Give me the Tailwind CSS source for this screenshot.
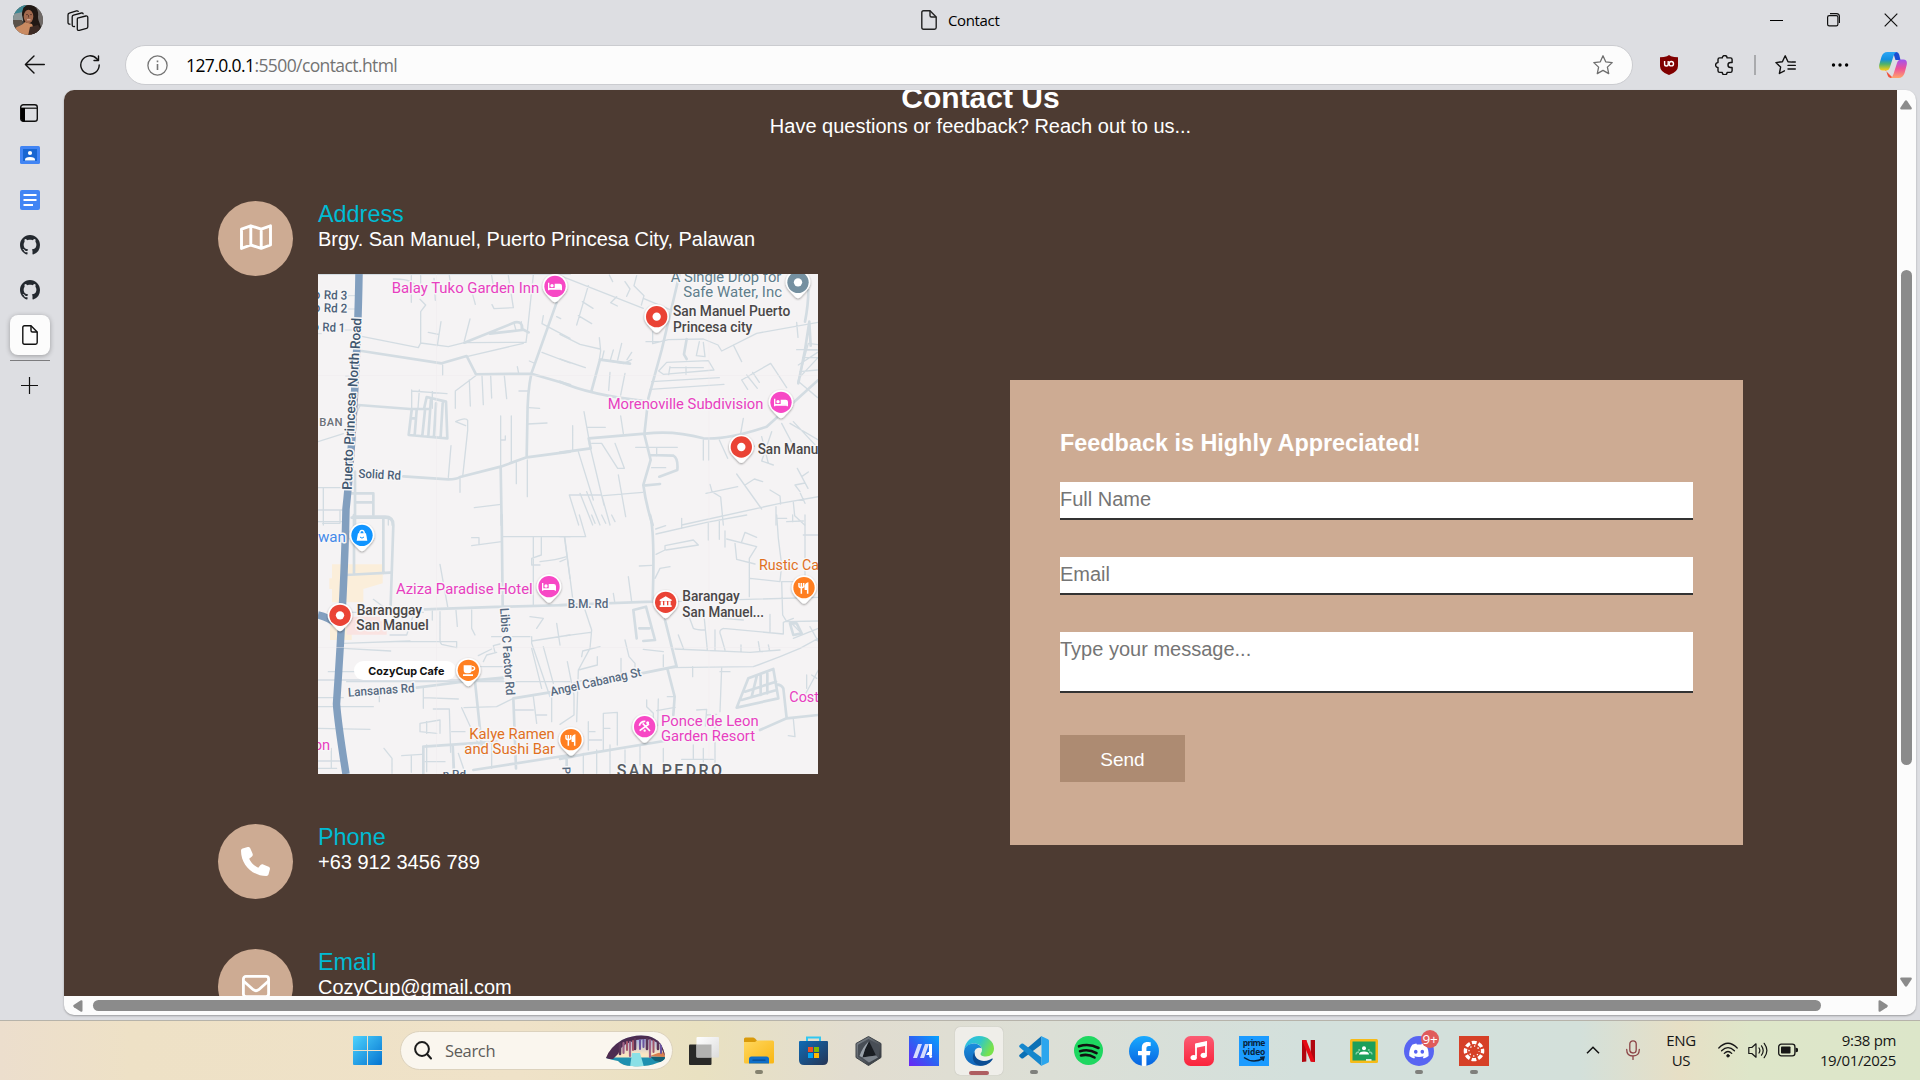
<!DOCTYPE html>
<html lang="en">
<head>
<meta charset="utf-8">
<title>Contact</title>
<script src="https://cdn.jsdelivr.net/npm/@tailwindcss/browser@4"></script>
</head>
<body class="w-[1920px] h-[1080px] overflow-hidden flex flex-col bg-[#dddee2] text-black font-['Open_Sans',sans-serif]">

<!-- Title bar -->
<header class="h-10 shrink-0 flex items-start relative">
  <svg class="ml-[13px] mt-[5px] size-[30px] shrink-0" viewBox="0 0 30 30">
    <defs><clipPath id="av"><circle cx="15" cy="15" r="15"/></clipPath></defs>
    <g clip-path="url(#av)">
      <rect width="30" height="30" fill="#4a4744"/>
      <path d="M0 0h13v9L0 14z" fill="#3d8793"/><path d="M0 9l10-2v9L0 18z" fill="#8d9697"/><path d="M0 15h9v9H0z" fill="#5b5148"/>
      <path d="M22 2h8v20l-5-2z" fill="#6f6966"/>
      <path d="M9 10C9 3 12 0 17 0c6 0 9 5 8 12 0 5 4 7 3 18H14z" fill="#211814"/>
      <path d="M1 26c2-6 7-4 11-9l7 2 2 5-3 7H2z" fill="#c98a61"/><path d="M17 22l8-2 4 6-6 5h-8z" fill="#3c2a24"/>
      <ellipse cx="15.500" cy="11.500" rx="4.800" ry="6.700" fill="#a2694e"/>
      <path d="M10.500 8.500c0-5 7-7.500 10-2l0-3.500-5-2.500-5 2z" fill="#211814"/>
      <path d="M13 9.600h2M17 9.600h2M15.500 10v2.500" stroke="#55332a" stroke-width=".8"/><path d="M14 14.800h3.500" stroke="#e8c0b0" stroke-width="1"/>
    </g>
  </svg>
  <svg class="ml-[24px] mt-[10px] size-[22px] shrink-0" viewBox="0 0 22 22" fill="none" stroke="#111" stroke-width="1.300" stroke-linejoin="round" stroke-linecap="round">
    <path d="M10.500 8.200l8.300-2.200q2-.3 2 1.500v9.300q0 1.200-1.200 1.600l-7.300 2q-2 .4-2-1.500V10q0-1.400 .2-1.800z"/>
    <path d="M7.500 16.500q-2.300 .4-2.300-1.500V6.800q0-1.300 1.300-1.700L14.500 3q1.300-.2 1.600 .8"/>
    <path d="M3 14.200q-2 0-2-1.800V4.900q0-1.300 1.300-1.700L9.500 .9q1.300-.2 1.700 .5"/>
  </svg>
  <div class="absolute left-[921px] top-[10px] flex items-center gap-[11px] h-5">
    <svg class="w-4 h-5" viewBox="0 0 16 20" fill="none" stroke="#222" stroke-width="1.400" stroke-linejoin="round"><path d="M2.500.8h6.500L15.200 7v10.500q0 1.700-1.700 1.700h-11Q.8 19.200.8 17.500v-15Q.8.8 2.500.8z"/><path d="M9 .8V5.500Q9 7 10.500 7h4.700"/></svg>
    <span class="text-[15px] leading-5 tracking-[-0.350px] text-black">Contact</span>
  </div>
  <div class="absolute left-[1770px] top-[13px] flex gap-[43px] h-[14px] items-center">
    <svg class="w-[13px] h-[13px]" viewBox="0 0 13 13"><path d="M0 6.500h13" stroke="#000" stroke-width="1"/></svg>
    <svg class="w-[14px] h-[14px]" viewBox="0 0 14 14" fill="none" stroke="#111" stroke-width="1.200"><rect x="1.600" y="2.600" width="10.300" height="10.300" rx="1.600"/><path d="M4 .7h6.500q2.900 0 2.900 2.900V10"/></svg>
    <svg class="w-[14px] h-[14px] ml-px" viewBox="0 0 14 14"><path d="M.7.7l12.600 12.600M13.300.7L.7 13.300" stroke="#111" stroke-width="1.200"/></svg>
  </div>
</header>

<!-- Toolbar -->
<div class="h-[50px] shrink-0 flex items-start relative">
  <svg class="ml-[24px] mt-[15px] w-[21px] h-[19px] shrink-0" viewBox="0 0 21 19" fill="none" stroke="#111" stroke-width="1.400" stroke-linecap="round" stroke-linejoin="round"><path d="M20.300 9.500H1.500M10 1L1.400 9.500 10 18"/></svg>
  <svg class="ml-[35px] mt-[15px] size-5 shrink-0" viewBox="0 0 20 20" fill="none" stroke="#111" stroke-width="1.400" stroke-linecap="round" stroke-linejoin="round"><path d="M19.200 10A9.200 9.200 0 1 1 16.800 3.800L18.300 5.300M18.500 1v4.500H14"/></svg>
  <div class="ml-[25px] mt-[5px] w-[1508px] h-[40px] shrink-0 rounded-full bg-[#fcfcfc] border border-[#cbccd0] flex items-center pl-[21px] pr-[19px]">
    <svg class="size-[21px]" viewBox="0 0 21 21" fill="none" stroke="#757575" stroke-width="1.300"><circle cx="10.500" cy="10.500" r="9.600"/><path d="M10.500 9v6M10.500 5.600v1.600" stroke-width="1.600"/></svg>
    <div class="ml-[18px] text-[17.500px] leading-6 tracking-[-0.600px] text-[#737373] whitespace-nowrap"><span class="text-black">127.0.0.1</span>:5500/contact.html</div>
    <svg class="ml-auto size-5" viewBox="0 0 20 20" fill="none" stroke="#6f6f6f" stroke-width="1.300" stroke-linejoin="round"><path d="M10 .8l2.700 6 6.500.8-4.800 4.500 1.300 6.500L10 15.400l-5.700 3.200 1.300-6.500L.8 7.600l6.500-.8z"/></svg>
  </div>
  <svg class="ml-[27px] mt-[15px] w-[18px] h-5 shrink-0" viewBox="0 0 18 20"><path d="M9 0l2 1.200q3 1 7 1V11q0 6-9 9-9-3-9-9V2.200q4 0 7-1z" fill="#800000"/><path d="M4.600 6v3.200a1.800 1.800 0 0 0 3.600 0V6" fill="none" stroke="#fff" stroke-width="1.400"/><circle cx="11.300" cy="8.700" r="2.200" fill="none" stroke="#fff" stroke-width="1.400"/></svg>
  <svg class="ml-[37px] mt-[15px] w-[19px] h-5 shrink-0" viewBox="0 0 19 20" fill="none" stroke="#111" stroke-width="1.400" stroke-linejoin="round"><path d="M3 4.600q0-1.700 1.700-1.700h2.600a2.400 2.400 0 0 1 4.800 0h3.300q1.700 0 1.700 1.700v2.900h-1.600a2.500 2.500 0 0 0 0 5h1.600v3.200q0 1.700-1.700 1.700h-3.300a2.400 2.400 0 0 1-4.800 0H4.700Q3 17.400 3 15.700v-3.300a2.400 2.400 0 0 1 0-4.800z"/></svg>
  <div class="ml-[20px] mt-[15px] w-[2px] h-5 bg-[#a9aaad] shrink-0"></div>
  <svg class="ml-[19px] mt-[15px] w-[21px] h-5 shrink-0" viewBox="0 0 21 20" fill="none" stroke="#111" stroke-width="1.400" stroke-linejoin="round" stroke-linecap="round"><path d="M17 7.100L13 6.700 10.200 .8 7.400 6.700.9 7.600l4.700 4.500-1.200 6.400 5-2.700M13 10.400h7.300M13 14h7.300M17 7h3.300"/></svg>
  <svg class="ml-[35px] mt-[22px] w-[18px] h-[6px] shrink-0" viewBox="0 0 18 6"><circle cx="2.500" cy="3" r="1.700"/><circle cx="9" cy="3" r="1.700"/><circle cx="15.600" cy="3" r="1.700"/></svg>
  <svg class="ml-[30px] mt-[12px] w-[28px] h-[26px] shrink-0" viewBox="0 0 28 26">
    <defs>
      <linearGradient id="cp1" x1="0" y1="0" x2="0" y2="1"><stop offset="0" stop-color="#2aa5f5"/><stop offset=".4" stop-color="#1490e0"/><stop offset=".65" stop-color="#4eb26b"/><stop offset="1" stop-color="#ffcf10"/></linearGradient>
      <linearGradient id="cp2" x1="0" y1="0" x2="0" y2="1"><stop offset="0" stop-color="#a055f0"/><stop offset=".5" stop-color="#ee5298"/><stop offset="1" stop-color="#ffa56a"/></linearGradient>
    </defs>
    <path d="M14 0h3q2.500 0 3.300 3l1.200 5h-5z" fill="#1b4bd0"/>
    <path d="M6 18l8 8h-2.500q-2.200 0-3-3L7 18z" fill="#f04e3a"/>
    <path d="M8.500 0h9q-2 .5-3 4l-3.500 11q-1 3.500-4 3.500H4Q-.8 18.500.3 12.500L2.400 5Q4 0 8.500 0z" fill="url(#cp1)"/>
    <path d="M19.500 26h-8q2-.5 3-4l3.500-11q1-3.500 4-3.500h2.500q4.200 0 3.200 5.500L25.600 21q-1.600 5-6.100 5z" fill="url(#cp2)"/>
  </svg>
</div>

<!-- Vertical tab strip and web page -->
<div class="h-[925px] shrink-0 flex">
  <nav class="w-16 shrink-0 flex flex-col items-center pr-[4px]">
    <svg class="mt-[14px] mr-[2px] size-[18px]" viewBox="0 0 18 18"><rect x=".7" y=".7" width="16.600" height="16.600" rx="2.600" fill="none" stroke="#111" stroke-width="1.400"/><path d="M1 4.200h16" stroke="#111" stroke-width="1.200"/><path d="M1 4h4v13.500H3Q1 17 1 15z"/></svg>
    <svg class="mt-[24px] w-5 h-[18px]" viewBox="0 0 20 18"><rect width="20" height="18" rx="1.500" fill="#4285f4"/><rect x="3" y="3" width="14" height="12" fill="#1967d2"/><circle cx="10" cy="7" r="2.100" fill="#fff"/><path d="M5 14.500v-1q0-2.600 5-2.600t5 2.600v1z" fill="#fff"/></svg>
    <svg class="mt-[26px] size-5" viewBox="0 0 20 20"><rect width="20" height="20" rx="2" fill="#4285f4"/><path d="M3.500 5h13M3.500 10h13M3.500 15h9.500" stroke="#fff" stroke-width="2.200"/></svg>
    <svg class="mt-[25px] size-5" viewBox="0 0 16 16" fill="#24292f"><path d="M8 0C3.580 0 0 3.580 0 8c0 3.540 2.290 6.530 5.470 7.590.4.070.55-.17.55-.38 0-.19-.01-.82-.01-1.490-2.010.37-2.530-.49-2.690-.94-.09-.23-.48-.94-.82-1.130-.28-.15-.68-.52-.01-.53.63-.01 1.080.58 1.230.82.720 1.210 1.870.87 2.330.66.070-.52.280-.87.510-1.070-1.780-.2-3.640-.89-3.640-3.950 0-.87.310-1.590.82-2.150-.08-.2-.36-1.020.08-2.120 0 0 .67-.21 2.200.82.640-.18 1.320-.27 2-.27s1.360.09 2 .27c1.530-1.040 2.200-.82 2.200-.82.440 1.100.16 1.920.08 2.120.51.560.82 1.270.82 2.150 0 3.070-1.870 3.750-3.650 3.950.29.250.54.730.54 1.480 0 1.070-.01 1.930-.01 2.200 0 .21.150.46.55.38A8.010 8.010 0 0 0 16 8c0-4.420-3.580-8-8-8z"/></svg>
    <svg class="mt-[25px] size-5" viewBox="0 0 16 16" fill="#24292f"><path d="M8 0C3.580 0 0 3.580 0 8c0 3.540 2.290 6.530 5.470 7.590.4.070.55-.17.55-.38 0-.19-.01-.82-.01-1.490-2.010.37-2.530-.49-2.690-.94-.09-.23-.48-.94-.82-1.130-.28-.15-.68-.52-.01-.53.63-.01 1.080.58 1.230.82.720 1.210 1.870.87 2.330.66.070-.52.280-.87.510-1.070-1.780-.2-3.640-.89-3.640-3.950 0-.87.310-1.590.82-2.150-.08-.2-.36-1.020.08-2.120 0 0 .67-.21 2.200.82.640-.18 1.320-.27 2-.27s1.360.09 2 .27c1.530-1.040 2.200-.82 2.200-.82.440 1.100.16 1.920.08 2.120.51.560.82 1.270.82 2.150 0 3.070-1.870 3.750-3.650 3.950.29.250.54.730.54 1.480 0 1.070-.01 1.930-.01 2.200 0 .21.150.46.55.38A8.010 8.010 0 0 0 16 8c0-4.420-3.580-8-8-8z"/></svg>
    <div class="mt-[15px] size-10 rounded-lg bg-[#fcfcfc] shadow-[0_1px_5px_rgba(0,0,0,0.3)] flex items-center justify-center">
      <svg class="w-4 h-5" viewBox="0 0 16 20" fill="none" stroke="#111" stroke-width="1.400" stroke-linejoin="round"><path d="M2.500.8h6.500L15.200 7v10.500q0 1.700-1.700 1.700h-11Q.8 19.200.8 17.500v-15Q.8.8 2.500.8z"/><path d="M9 .8V5.500Q9 7 10.500 7h4.700"/></svg>
    </div>
    <div class="mt-[5px] w-10 h-px bg-[#7c7c7e]"></div>
    <svg class="mt-[16px] mr-[1px] size-[17px]" viewBox="0 0 17 17"><path d="M8.500 0v17M0 8.500h17" stroke="#111" stroke-width="1.200"/></svg>
  </nav>

  <div class="w-[1852px] h-[925px] rounded-[10px] overflow-hidden bg-[#fcfcfc] shadow-[0_1px_2px_rgba(0,0,0,0.3)] flex flex-col">
    <div class="flex h-[906px] shrink-0">
      <main class="w-[1833px] h-[906px] overflow-hidden bg-[#4d3b32] font-['Liberation_Sans',Arial,sans-serif] text-white text-[20px] leading-[23px]">
        <div class="-mt-[9px] text-center">
          <h1 class="text-[30px] leading-[34px] font-bold">Contact Us</h1>
          <p>Have questions or feedback? Reach out to us...</p>
        </div>
        <div class="mt-[63px] mx-[154px] h-[823px] flex items-center justify-between">
          <section class="flex flex-col gap-[50px]">
            <div class="flex items-start gap-[25px]">
              <div class="size-[75px] rounded-full bg-[#cdab93] flex items-center justify-center pb-[3px]">
                <svg class="w-8 h-[26px]" viewBox="0 0 32 26" fill="none" stroke="#fff" stroke-width="2.900" stroke-linejoin="round"><path d="M1.500 5.200L10.800 1.800 21.200 5.200 30.500 1.800V21L21.200 24.400 10.800 21 1.500 24.400zM10.800 1.800V21M21.200 5.200v19"/></svg>
              </div>
              <div class="h-[573px] flex flex-col">
                <h3 class="text-[23.400px] leading-[27px] text-[#00bcd4]">Address</h3>
                <p>Brgy. San Manuel, Puerto Princesa City, Palawan</p>
                <svg class="mt-[23px] size-[500px]" viewBox="0 0 500 500" font-family="Roboto, sans-serif" font-weight="500">
                  <defs>
                    <filter id="sh" x="-50%" y="-50%" width="200%" height="200%"><feDropShadow dx="0" dy="3" stdDeviation="3" flood-color="#000" flood-opacity=".4"/></filter>
                    <path id="pin" d="M-37 0A37 37 0 1 1 37 0C37 18 22 28 10 42Q0 54-10 42C-22 28-37 18-37 0Z" fill="#fff" filter="url(#sh)"/>
                    <g id="red"><use href="#pin"/><circle r="32" fill="#ea4335"/><circle r="12.500" fill="#fff"/></g>
                    <g id="bed"><use href="#pin"/><circle r="32" fill="#f748c5"/><path d="M-19-11V12M-19 8H19M19 12V-1Q19-6 14-6H1V7H-18" fill="none" stroke="#fff" stroke-width="4"/><path d="M1-6h13q5 0 5 5v8H1z" fill="#fff"/><circle cx="-9" cy="-2" r="5" fill="#fff"/></g>
                    <g id="food"><use href="#pin"/><circle r="32" fill="#ff7f21"/><path d="M-8-14V18M-15-14v9q0 5 7 5t7-5v-9M11 18V-13q-9 3-7 18h7" fill="none" stroke="#fff" stroke-width="4.500"/><path d="M11-14q-9 4-7 19h7z" fill="#fff"/></g>
                  </defs>
                  <rect width="500" height="500" fill="#f5f3f4"/>
                  <!-- north-west roads -->
                  <g transform="translate(-8 -9) scale(.33333)" fill="none" stroke="#d3dce2" stroke-width="4" stroke-linejoin="round" stroke-linecap="round">
                    <path d="M155 214L325 248 332 234 415 245 463 233 648 232 652 200 670 30M332 234V140L347 120 330 103M355 202l30 6M393 170l-11 72M480 162L463 228M250 42q60-2 75 30M304 32v80M332 32v40M372 40l4 66M418 32l6 40M484 74l12 44M545 32l6 36M595 32l15 96-58 3-6-12M612 174l6 22M634 170v22M640 235l-170 40M398 300v30M500 330L436 378V430M478 345l3 78M516 332l4 87M542 332l3 67M583 332l7 69M622 305l4 20M305 378l106 8M305 375V440M328 375l-4 55M367 380V430M437 470q30-14 36-4v30L458 635M437 470l30 12M423 542l-8 95M450 640v42M572 453V605M604 453V590M572 525h14V513M619 592v64M652 585v110M655 378h-28M657 428l32 2M653 477l58-3M493 728l80-10M700 152l-4 24 84 44M696 262l84 32M658 288l14 6M740 155l12 6M24 530L100 506M24 668H100M40 668V780M24 735h76M90 735V775M38 775h52M150 422l-12 25M220 760v20M235 760v20"/>
                    <path stroke-width="8" d="M155 258L395 295 470 273 498 328 664 326 780 360M664 326Q652 380 652 470L650 577M280 634L415 643Q440 643 450 636L572 605 650 577 780 560M572 605L575 780M145 420L300 432H360M740 112L664 326M463 233L615 172Q640 168 636 195L540 206M636 192l20 10M305 435L296 510 412 520 408 410 350 396 342 432M345 435L337 512M363 400L355 512M378 415l-6 98M398 415l-6 100M320 435l-6 75M305 460h12M135 620V780M115 685H190V750M140 712h48M125 758H225Q250 758 248 780"/>
                    <path stroke-width="3" d="M115 92h20M115 132h20M105 195h26M24 206h10M107 333h38"/>
                    <path stroke-width="6" d="M24 27H780" />
                  </g>
                  <!-- north-east roads -->
                  <g transform="translate(242 -9) scale(.33333)" fill="none" stroke="#d3dce2" stroke-width="4" stroke-linejoin="round" stroke-linecap="round">
                    <path d="M0 32L250 130M85 62L50 180M67 110l32 20M55 152l40 24M148 30l10 20M195 50l15 22-10 22M230 32l-8 30 30 30-8 28M170 95l-18 18 20 10M250 100l80 34M0 208L60 238 120 252M0 282L76 308M118 218l4 40-4 25M120 282L190 296 215 284M185 235l-12 50M160 255l-10 34M132 258l-6 26M215 262l-14 22M150 322l-4 54M195 325L182 390M258 230h40M278 200v36L325 224 430 222 474 240 485 258 590 205 775 172M430 232L435 275 409 272 418 230M520 240l25 50M296 318L320 292 445 287 462 315 310 328zM330 308h100M330 305l-4 24M378 306v22M275 350L478 338M270 373l222-15M545 345L632 295 680 368M545 345l18 28M560 330l32 40M578 322l20 30M710 172l4 45M745 235l-32 118M745 235l30 4M715 300l58-38M720 320l52-5M716 340l56-60M718 352l55 46M735 255h38M728 278h45M710 254h60M72 440l14 78M80 487h56M182 453l8 52M38 482v75M88 536L132 720M165 535l28 75h-20L125 535H95M55 560L100 705M28 690H125L150 780M28 690l28 90M60 685l38 95M80 680l40 100M175 630l22 125M130 692l118-10M227 547h125M290 547V572M275 608h42M430 525v60M446 525v60M478 525l25 55M550 460l-8 45M530 627L605 732M555 660l28-18 25 8M438 685l95-20M450 658l6 22 26 16 8 84M365 780L660 715 775 695M568 520l15 24M605 515l20 80M640 600L605 588 635 500M665 475l50 95M700 470l75 80M690 475l85 50M712 610l32 60M725 635l20-14M630 675l30 18 2 24M720 680L705 660l30-6M648 725v55M700 712l4 40 30 28M735 715l-14-30M680 770l50-2"/>
                    <path stroke-width="8" d="M358 30L305 255 265 400 253 508 272 585 250 660Q258 720 278 780M0 350Q90 390 255 408M95 376L120 284 210 296M380 222L372 268l8 14M0 563L92 550 86 520 255 506Q340 495 430 520 500 525 620 485L775 345M270 570L340 572Q355 580 352 615L298 635M250 662L300 657M748 170L735 255 715 355M745 75q0 45-10 95M748 172l4 70"/>
                  </g>
                  <!-- south-west roads -->
                  <g transform="translate(-8 241) scale(.33333)" fill="none" stroke="#d3dce2" stroke-width="4" stroke-linejoin="round" stroke-linecap="round">
                    <path stroke="none" fill="#fbeeda" d="M66 148H218V205L160 222V262H66V222H58V190H66zM60 330H125V375H60z"/>
                    <path stroke="none" fill="#fae3e1" d="M110 305h100v14h20v40H110z"/>
                    <path d="M580 65H780M485 92L575 80M485 68h22v20M670 65V270M694 68V120L665 130V150H690M690 140q50-5 80-15M763 65L780 190M390 148L413 275M190 253l40 30M24 20l70 0M125 292H340M367 288V315M390 290v85Q390 385 395 388L440 398V380H240M438 286l4 48M485 285v55l10 20M100 385L300 378M100 400L242 408M240 360H290L310 300M545 365H660M660 305l40 5-20 30M665 378L780 360M740 325l10 65M665 365v20L720 545M665 400l30 120M700 395l30 110M505 422l40-20M520 440l10-20 30-8M555 412l-5-20 20-5M445 455H580M24 495H580M55 470h140M110 500H780M340 520V580M340 548L445 552M208 540v20M24 548H100M24 575H190M24 640L180 643M24 738H95M64 700v60M24 760H80M370 582h48l4 130M330 625l60-10v40M330 625V650L380 655M350 620v35M390 618v30M222 700l24 30v45M275 722L335 718M304 722v50M462 578L560 575 610 550M455 578L520 720M615 585H670M680 600h30M670 545l10 80M725 545v75M700 660h30M425 650h40M350 690v80M430 720v55M345 740h60M445 715l20 58M545 680v80"/>
                    <path stroke-width="8" d="M575 0L578 270M345 283L580 275 780 270M130 5H225Q250 5 250 30L242 270M132 0V175M220 10v165M105 180L240 173M320 518L500 495 580 488M495 500L515 690M340 695L560 680M428 690l4 80M340 695v80M610 550L618 760M610 550L720 532M490 765L780 720"/>
                  </g>
                  <!-- south-east roads -->
                  <g transform="translate(242 241) scale(.33333)" fill="none" stroke="#d3dce2" stroke-width="4" stroke-linejoin="round" stroke-linecap="round">
                    <path d="M0 65H77L58 0M95 0l10 25M125 0l12 25M155 0l10 20M14 65L40 265M0 140l18-8M287 42l30-10M288 57L440 22 560 0M365 10v30M445 25v50M478 15v58M495 48v48M500 72L590 95 568 130V245M545 80l10-28 35 15M525 85l5 48 55 14M288 118L315 105V92L400 75 415 90 318 105M238 153l38-2M285 190L300 160 330 155M205 185l10 75M160 235l4 25M75 285L95 345 90 400 55 465 50 620M18 362L92 352M65 425L68 408 120 395M183 430v45M195 375l12 50 18 20v40M340 260l500-15M570 190L660 200 665 150 655 70 650 0M735 0V200M650 10h30M698 0v20M775 60H730M735 200H665L668 300 680 320 775 318M380 285l20 55Q410 345 435 345M430 280l12 125M490 340L670 357V322L700 310M490 340Q475 345 482 360L495 405M465 345v60M345 402L570 412 660 405M355 360l15 40M543 390v20M595 380l5 30M625 390l4 18M775 370L720 400Q650 430 580 455L330 458M775 340L700 370M630 298v55M490 310l60 5M690 320L720 350M750 335l25 45M0 530L50 500 170 480M22 440L42 540V600L0 628M112 425V450L55 465M250 403L310 410M310 420v35M322 545h20M295 552l-2 80M260 555v20l20 20v40M290 587l55-10M85 620V705M85 650h20M130 595L172 592V690M130 595V705M132 640h18M85 675h40M398 455v30M485 458L480 590M480 470h30M410 585l30-2-4 50M365 733H460M400 690v40M465 630V775M440 600L470 598M700 612L705 665 685 662M740 480v40M735 540l40-75M755 480l15 10M150 690v85M110 705v70M195 705v70M240 690v60M70 715v60M310 700v75M430 700v75"/>
                    <path stroke-width="8" d="M270 0Q285 50 278 255M0 270L278 260M315 315L350 455M245 475L345 455M322 460L344 545 340 600M220 285L258 275 285 375 250 378M220 285l10 85M238 340h30M0 732L70 718 330 675M600 645L680 610 775 600M680 610L670 520Q665 510 650 508M530 578L565 490 640 462 655 550zM555 530L648 500M545 555L650 525M602 480v60M622 475v60M590 485l-15 60M690 325l10 35 25-5-15-30zM20 732v45"/>
                  </g>
                  <!-- national highway -->
                  <path d="M41 0C40 70 34 180 28 235C27 290 24 350 18.500 430Q20 450 28 500M0 341Q10 343 22 352" fill="none" stroke="#829fbf" stroke-width="7.500"/>
                  <path d="M0 101.500H500M118.500 0V500M391 0V500M0 373.500H500" stroke="#eeebec" stroke-width=".6" opacity=".7"/>
                  <!-- labels -->
                  <g stroke="#f7f6f7" stroke-width="9" paint-order="stroke" stroke-linejoin="round">
                    <g transform="translate(-8 -9) scale(.33333)" font-size="37" fill="#4b5f78">
                      <text x="245" y="85" font-size="44" font-weight="400" fill="#e83fc0" textLength="443" lengthAdjust="spacingAndGlyphs">Balay Tuko Garden Inn</text>
                      <text x="10" y="102">o</text><text x="41" y="102" textLength="70" lengthAdjust="spacingAndGlyphs" transform="rotate(2 41 102)">Rd 3</text>
                      <text x="10" y="141">o</text><text x="41" y="141" textLength="70" lengthAdjust="spacingAndGlyphs" transform="rotate(2 41 141)">Rd 2</text>
                      <text x="6" y="199">o</text><text x="37" y="199" textLength="68" lengthAdjust="spacingAndGlyphs" transform="rotate(2 37 199)">Rd 1</text>
                      <text x="28" y="484" font-size="34" fill="#6b7178" textLength="70">BAN</text>
                      <text x="145" y="638" textLength="127" lengthAdjust="spacingAndGlyphs" transform="rotate(3 145 638)">Solid Rd</text>
                      <g fill="#3f566f" font-size="41"><text transform="translate(125 675) rotate(-88)" textLength="122" lengthAdjust="spacingAndGlyphs">Puerto</text><text transform="translate(131 540) rotate(-87.500)" textLength="158" lengthAdjust="spacingAndGlyphs">Princesa</text><text transform="translate(142 367) rotate(-87)" textLength="103" lengthAdjust="spacingAndGlyphs">North</text><text transform="translate(149 253) rotate(-87)" textLength="94" lengthAdjust="spacingAndGlyphs">Road</text></g>
                    </g>
                    <g transform="translate(242 -9) scale(.33333)" font-size="44" font-weight="400">
                      <g fill="#607d8b"><text x="332" y="52" textLength="332" lengthAdjust="spacingAndGlyphs">A Single Drop for</text><text x="370" y="95" textLength="296" lengthAdjust="spacingAndGlyphs">Safe Water, Inc</text></g>
                      <g fill="#4a4747" font-weight="500" font-size="42"><text x="339" y="153" textLength="352" lengthAdjust="spacingAndGlyphs">San Manuel Puerto</text><text x="339" y="200" textLength="238" lengthAdjust="spacingAndGlyphs">Princesa city</text><text x="593" y="566" textLength="182" lengthAdjust="spacingAndGlyphs">San Manu</text></g>
                      <text x="143" y="433" fill="#e83fc0" textLength="467" lengthAdjust="spacingAndGlyphs">Morenoville Subdivision</text>
                    </g>
                    <g transform="translate(-8 241) scale(.33333)" font-size="44" font-weight="400">
                      <text x="24" y="82" fill="#4489e8" textLength="84" lengthAdjust="spacingAndGlyphs">wan</text>
                      <text x="258" y="236" fill="#e83fc0" textLength="410" lengthAdjust="spacingAndGlyphs">Aziza Paradise Hotel</text>
                      <g fill="#4a4747" font-weight="500" font-size="42"><text x="140" y="299" textLength="196" lengthAdjust="spacingAndGlyphs">Baranggay</text><text x="139" y="345" textLength="217" lengthAdjust="spacingAndGlyphs">San Manuel</text></g>
                      <g fill="#56697f" font-weight="500" font-size="37"><text transform="translate(570 280) rotate(86)" textLength="262" lengthAdjust="spacingAndGlyphs">Libis C Factor Rd</text><text transform="translate(115 545) rotate(-4)" textLength="200" lengthAdjust="spacingAndGlyphs">Lansanas Rd</text></g>
                      <g fill="#e0701f"><text x="478" y="672" textLength="256" lengthAdjust="spacingAndGlyphs">Kalye Ramen</text><text x="463" y="717" textLength="272" lengthAdjust="spacingAndGlyphs">and Sushi Bar</text></g>
                      <text x="11" y="706" fill="#e83fc0">on</text>
                      <text x="398" y="790" fill="#56697f" font-size="35" font-weight="500">n Rd</text>
                      <rect x="132" y="438" width="306" height="57" rx="28" fill="#fff" stroke="none"/>
                      <text x="175" y="479" font-family="Inter, sans-serif" font-weight="700" font-size="33" fill="#111" stroke="none" textLength="228" lengthAdjust="spacingAndGlyphs">CozyCup Cafe</text>
                    </g>
                    <g transform="translate(242 241) scale(.33333)" font-size="44" font-weight="400">
                      <text x="597" y="164" fill="#e0701f" textLength="180" lengthAdjust="spacingAndGlyphs">Rustic Ca</text>
                      <g fill="#4a4747" font-weight="500" font-size="42"><text x="367" y="259" textLength="172" lengthAdjust="spacingAndGlyphs">Barangay</text><text x="367" y="306" textLength="245" lengthAdjust="spacingAndGlyphs">San Manuel...</text></g>
                      <g fill="#56697f" font-weight="500" font-size="36"><text x="23" y="279" textLength="122" lengthAdjust="spacingAndGlyphs">B.M. Rd</text><text transform="translate(-26 543) rotate(-12.500)" textLength="278" lengthAdjust="spacingAndGlyphs" font-size="37">Angel Cabanag St</text><text transform="translate(7 756) rotate(88)" font-size="34">P</text></g>
                      <g fill="#e83fc0"><text x="303" y="634" textLength="293" lengthAdjust="spacingAndGlyphs">Ponce de Leon</text><text x="303" y="679" textLength="282" lengthAdjust="spacingAndGlyphs">Garden Resort</text><text x="688" y="560" textLength="89" lengthAdjust="spacingAndGlyphs">Cost</text></g>
                      <text x="170" y="784" font-size="48" font-weight="500" fill="#555a60" textLength="316">SAN PEDRO</text>
                    </g>
                  </g>
                  <!-- pins -->
                  <g transform="translate(-8 -9) scale(.33333)"><use href="#bed" x="735" y="64"/></g>
                  <g transform="translate(242 -9) scale(.33333)"><use href="#red" x="290" y="155"/><use href="#red" x="544" y="546"/><use href="#bed" x="663" y="412"/><g transform="translate(714 52)"><use href="#pin"/><circle r="32" fill="#7590a0"/><circle r="12.500" fill="#fff"/></g></g>
                  <g transform="translate(-8 241) scale(.33333)">
                    <g transform="translate(156 61)"><use href="#pin"/><circle r="32" fill="#1094ff"/><path d="M-12-6h24l4 22h-32z" fill="#fff"/><path d="M-7-5q0-10 7-10t7 10" fill="none" stroke="#fff" stroke-width="4"/><path d="M-6 5q6 7 12 0" fill="none" stroke="#1094ff" stroke-width="3"/></g>
                    <use href="#bed" x="717" y="215"/><use href="#red" x="90" y="301"/>
                    <g transform="translate(475 466)"><use href="#pin"/><circle r="32" fill="#ff7f21"/><path d="M-14-15h24v15q0 9-9 9h-6q-9 0-9-9zM-16 12h30v5h-30z" fill="#fff"/><path d="M10-12q9 0 9 6t-10 7" fill="none" stroke="#fff" stroke-width="4"/></g>
                  </g>
                  <g transform="translate(242 241) scale(.33333)">
                    <g transform="translate(317 262)"><use href="#pin"/><circle r="32" fill="#ea4335"/><path d="M0-18L18-8v4h-36v-4zM-15-3h7V9h-7zM-4-3h8V9h-8zM8-3h7V9H8zM-18 9h36v5h-36z" fill="#fff"/></g>
                    <use href="#food" x="732" y="218"/><use href="#food" x="33" y="674"/>
                    <g transform="translate(254 635)"><use href="#pin"/><circle r="32" fill="#f748c5"/><path d="M-15 12L13-8M-6-10L16 13M-16-3q4-14 18-13" fill="none" stroke="#fff" stroke-width="5"/><circle cx="9" cy="-12" r="4.500" fill="#fff"/><circle cx="0" cy="12" r="3.500" fill="#fff"/></g>
                  </g>
                </svg>
              </div>
            </div>
            <div class="flex items-start gap-[25px]">
              <div class="size-[75px] rounded-full bg-[#cdab93] flex items-center justify-center">
                <svg class="size-[29px]" viewBox="0 0 512 512" fill="#fff"><path d="M164.900 24.600c-7.700-18.600-28-28.500-47.400-23.200l-88 24C12.100 30.200 0 46 0 64c0 247.400 200.600 448 448 448 18 0 33.800-12.100 38.600-29.500l24-88c5.300-19.400-4.600-39.700-23.200-47.400l-96-40c-16.300-6.800-35.200-2.100-46.300 11.600L304.700 368C234.300 334.700 177.300 277.700 144 207.300l49.300-40.300c13.700-11.200 18.400-30 11.600-46.300l-40-96z"/></svg>
              </div>
              <div><h3 class="text-[23.400px] leading-[27px] text-[#00bcd4]">Phone</h3><p>+63 912 3456 789</p></div>
            </div>
            <div class="flex items-start gap-[25px]">
              <div class="size-[75px] rounded-full bg-[#cdab93] flex items-center justify-center pb-px">
                <svg class="w-[28px] h-[23px]" viewBox="0 0 28 23" fill="none" stroke="#fff" stroke-width="2.800" stroke-linejoin="round"><rect x="1.400" y="1.400" width="25.200" height="20.200" rx="2.500"/><path d="M1.500 6l9.800 8.700q2.700 2 5.400 0L26.500 6"/></svg>
              </div>
              <div><h3 class="text-[23.400px] leading-[27px] text-[#00bcd4]">Email</h3><p>CozyCup@gmail.com</p></div>
            </div>
          </section>

          <form class="w-[733px] h-[465px] bg-[#cdab93] p-[50px] flex flex-col items-stretch">
            <h3 class="text-[23.400px] leading-[26px] font-bold">Feedback is Highly Appreciated!</h3>
            <input class="mt-[26px] h-[38px] bg-white border-b-2 border-[#333] pt-[6px] pb-[7px] placeholder:text-[#757575]" placeholder="Full Name">
            <input class="mt-[37px] h-[38px] bg-white border-b-2 border-[#333] pt-[6px] pb-[7px] placeholder:text-[#757575]" placeholder="Email">
            <textarea class="mt-[37px] h-[61px] bg-white border-b-2 border-[#333] pt-[6px] resize-none overflow-hidden placeholder:text-[#757575]" placeholder="Type your message..."></textarea>
            <button type="button" class="mt-[42px] w-[125px] h-[47px] shrink-0 bg-[#ad8b72] text-[19px] text-white pt-px">Send</button>
          </form>
        </div>
      </main>
      <div class="w-[19px] h-full flex flex-col items-center pr-px">
        <svg class="mt-[10px] w-[12px] h-[10px] shrink-0" viewBox="0 0 12 10"><path d="M4.800 1q1.200-1.600 2.400 0L11.500 7.500Q12.500 9.500 10.500 9.500h-9Q-.5 9.500.5 7.500z" fill="#8b8b8b"/></svg>
        <div class="mt-[160px] w-[11px] h-[495px] shrink-0 rounded-full bg-[#8b8b8b]"></div>
        <svg class="mt-auto mb-[9px] w-[12px] h-[10px] shrink-0 rotate-180" viewBox="0 0 12 10"><path d="M4.800 1q1.200-1.600 2.400 0L11.500 7.500Q12.500 9.500 10.500 9.500h-9Q-.5 9.500.5 7.500z" fill="#8b8b8b"/></svg>
      </div>
    </div>
    <div class="h-[19px] shrink-0 flex items-center">
      <svg class="ml-[9px] w-[10px] h-[12px] shrink-0" viewBox="0 0 10 12"><path d="M1 4.800q-1.600 1.200 0 2.400L7.500 11.500Q9.500 12.500 9.500 10.500v-9Q9.500-.5 7.500.5z" fill="#8b8b8b"/></svg>
      <div class="ml-[10px] w-[1728px] h-[11px] shrink-0 rounded-full bg-[#8b8b8b]"></div>
      <svg class="ml-[57px] w-[10px] h-[12px] shrink-0 rotate-180" viewBox="0 0 10 12"><path d="M1 4.800q-1.600 1.200 0 2.400L7.500 11.500Q9.500 12.500 9.500 10.500v-9Q9.500-.5 7.500.5z" fill="#8b8b8b"/></svg>
    </div>
  </div>
</div>

<!-- Taskbar -->
<footer class="mt-[5px] h-[60px] shrink-0 border-t border-[#b6b3aa] flex items-center bg-[linear-gradient(90deg,#ecdecd_0px,#eee1c6_130px,#efe2c8_520px,#e9e1c1_700px,#e2ddd0_850px,#dcdfd6_1050px,#d3e0dc_1300px,#d3e0da_1580px,#e7dfc5_1680px,#dee6c9_1750px,#dce6c9_1920px)]">
  <svg class="ml-[353px] size-[29px] shrink-0" viewBox="0 0 29 29"><defs><linearGradient id="w" x1="0" y1="0" x2="1" y2="1"><stop offset="0" stop-color="#4ed3fd"/><stop offset="1" stop-color="#0473d0"/></linearGradient></defs><path d="M1 0h13v14H0V1q0-1 1-1zM15 0h13q1 0 1 1v13H15zM0 15h14v14H1q-1 0-1-1zM15 15h14v13q0 1-1 1H15z" fill="url(#w)"/></svg>
  <div class="ml-[18px] w-[273px] h-[39px] shrink-0 rounded-full bg-[#faf6ee] border border-[#dcd2bd] flex items-center pl-[13px] pr-[7px]">
    <svg class="w-[18px] h-[19px]" viewBox="0 0 18 19" fill="none" stroke="#1b1b1b" stroke-width="2" stroke-linecap="round"><circle cx="8" cy="8" r="6.900"/><path d="M13 13l4 4.500"/></svg>
    <span class="ml-[13px] text-[16.500px] leading-6 tracking-[-0.350px] text-[#5e5c59]">Search</span>
    <svg class="ml-auto w-[59px] h-[32px]" viewBox="0 0 59 32">
      <defs><clipPath id="cv"><path d="M0 23Q4 12 16 5 28-1 42 1q16 4 17 22-1 3-8 5-10 4-25 3-10 0-14-5Q6 25 0 23z"/></clipPath><linearGradient id="cs" x1="0" y1="0" x2="0" y2="1"><stop offset=".15" stop-color="#aab7de"/><stop offset=".6" stop-color="#fbe6c2"/></linearGradient></defs>
      <g clip-path="url(#cv)"><rect width="59" height="32" fill="url(#cs)"/><path d="M0 22.500H59V32H0z" fill="#1f90b0"/><path d="M26 18h8l4 14H24z" fill="#8be0e6"/><path d="M44 21.500h15V28l-10-2z" fill="#136074"/><path d="M44 21l8-3 7-1v5z" fill="#d97e4e"/>
      <path d="M0 24.500V0H59V21L57 17 54 9 48 6 40 4 30 5 20 9 15 13 12 19 7 24z" fill="#4c2c50"/>
      <path d="M14 9v10M29 4v10M41 4v10M52 5v9" stroke="#5a3558" stroke-width="2.600" stroke-linecap="round"/>
      <path d="M17.500 8v10M24 7v14M44 5v17" stroke="#a06488" stroke-width="2.200" stroke-linecap="round"/>
      <path d="M21 7v8M27 6v9M47.500 6v11" stroke="#a4566a" stroke-width="2" stroke-linecap="round"/>
      <path d="M34 5v9M37.500 5v7M55 8v10" stroke="#6b549f" stroke-width="2" stroke-linecap="round"/></g>
    </svg>
  </div>
  <div class="ml-[3px] flex items-center h-full shrink-0">
    <div class="w-[55px] flex justify-center"><svg class="w-[30px] h-[28px]" viewBox="0 0 30 28"><defs><linearGradient id="tw" x1="0" y1="0" x2="1" y2="1"><stop offset="0" stop-color="#fff"/><stop offset="1" stop-color="#dcdcdc"/></linearGradient></defs><rect y="7.500" width="22.500" height="20.500" rx="1" fill="#292927"/><rect x="7.500" width="22.500" height="20.500" rx="1" fill="url(#tw)"/><path d="M7.500 7.500h15v13h-15z" fill="#b2b2b0"/></svg></div>
    <div class="w-[55px] h-full relative flex justify-center items-center"><svg class="w-[30px] h-[27px]" viewBox="0 0 30 27"><defs><linearGradient id="fo" x1="0" y1="0" x2="1" y2="1"><stop offset="0" stop-color="#ffd75e"/><stop offset="1" stop-color="#f9b613"/></linearGradient></defs><path d="M0 2q0-1.500 1.500-1.500H9q1 0 2 1L13 3.500V8H0z" fill="#d99a0b"/><path d="M0 5h11l2-1.500h15.500q1.500 0 1.500 1.500V25q0 1.500-1.500 1.500h-27Q0 26.500 0 25z" fill="url(#fo)"/><path d="M5 26.500V22q0-2.500 2.500-2.500h15Q25 19.500 25 22v4.500z" fill="#0f6fc8"/><path d="M9 23.200h12" stroke="#084b8f" stroke-width="1.300" stroke-linecap="round"/></svg><div class="absolute bottom-[6px] w-2 h-1 rounded-full bg-[#85826f]"></div></div>
    <div class="w-[55px] flex justify-center"><svg class="w-[29px] h-[30px]" viewBox="0 0 29 30"><defs><linearGradient id="st" x1="0" y1="0" x2="1" y2="1"><stop offset="0" stop-color="#0f6bb5"/><stop offset="1" stop-color="#263555"/></linearGradient></defs><path d="M8 7V1.500h13V7" fill="none" stroke="#32c7f1" stroke-width="2"/><path d="M1 5h27q1 0 1 1v18q0 5-5 5H5q-5 0-5-5V6q0-1 1-1z" fill="url(#st)"/><path d="M9 11h5v5H9z" fill="#f25022"/><path d="M15 11h5v5h-5z" fill="#7fba00"/><path d="M9 17h5v5H9z" fill="#00a4ef"/><path d="M15 17h5v5h-5z" fill="#ffb900"/></svg></div>
    <div class="w-[55px] flex justify-center"><svg class="w-[27px] h-[30px]" viewBox="0 0 27 30"><defs><linearGradient id="hx" x1="0" y1="0" x2="1" y2="1"><stop offset="0" stop-color="#848b93"/><stop offset="1" stop-color="#2b2f34"/></linearGradient></defs><path d="M13.500 .5L26 7.500v14L13.500 29.500 1 21.500v-14z" fill="url(#hx)" stroke="#3e4348"/><path d="M13.500 3L3 8.700v12l10.500 6.300 10.500-6.300v-12z" fill="#484e56"/><path d="M14 5l7 14.500-14 2q3-9 7-16.500z" fill="#191d22"/><path d="M14 5q-7 7-9.500 15l3 1.500q2-9 6.500-16.500z" fill="#9aa2aa"/><path d="M7 21.500l14-2 2 2-9 5z" fill="#7b828a"/></svg></div>
    <div class="w-[55px] flex justify-center"><svg class="size-[30px]" viewBox="0 0 30 30"><defs><linearGradient id="ma" x1="0" y1="1" x2="1" y2="0"><stop offset="0" stop-color="#6a25f4"/><stop offset=".5" stop-color="#2c62f3"/><stop offset="1" stop-color="#03a3ff"/></linearGradient></defs><rect width="30" height="30" fill="url(#ma)"/><path d="M9 8h4L8 22H4zM16 8h4l-5 14h-4z" fill="#d6dcfc"/><path d="M20 8h3v10l-3 2z" fill="#fff"/><path d="M17 19h6v-3h-4z" fill="#fff"/><circle cx="21.700" cy="20.500" r="1.400" fill="#fff"/></svg></div>
    <div class="w-[55px] h-full relative flex justify-center items-center"><div class="w-12 h-12 rounded-[5px] bg-[#efeee9] shadow-[0_0_1px_rgba(0,0,0,0.25)] flex items-center justify-center"><svg class="size-[30px]" viewBox="0 0 30 30"><defs><linearGradient id="e1" x1="0" y1="0" x2="1" y2=".4"><stop offset="0" stop-color="#2db9ea"/><stop offset=".55" stop-color="#30c7c9"/><stop offset="1" stop-color="#79e24b"/></linearGradient><linearGradient id="e2" x1="0" y1="0" x2="0" y2="1"><stop offset="0" stop-color="#1a8ede"/><stop offset="1" stop-color="#1264b8"/></linearGradient></defs><path d="M.3 13.500C1.200 5.500 7.500 0 15 0c8.500 0 15 5.500 15 12.500 0 5-3.500 8-8 8-4 0-5.500-1.500-5.500-2.600 0-1 1.500-1.400 1.500-4.200C18 10 14.500 7.500 10 7.500c-4.500 0-8 2.500-9.700 6z" fill="url(#e1)"/><path d="M0 16C0 11 4.500 7.500 9.500 7.500c4 0 7.500 2 8.300 5-1.300-1.500-6.600-1.500-7.300 3.500-.9 6 3 11.500 9.500 12.500-1.500.8-3.200 1.300-5 1.300C7 29.800 0 24 0 16z" fill="url(#e2)"/><path d="M10.500 16c-.5 5 4 9 9.500 9 4 0 6.500-1.800 8-2.500 .5-.2 1 .3.700.8C26.500 27 22 30 16.500 29.800 9 28.500 7 21 10.500 16z" fill="#0b4d93"/></svg></div><div class="absolute bottom-[5px] w-5 h-1 rounded-full bg-[#ae5e61]"></div></div>
    <div class="w-[55px] h-full relative flex justify-center items-center"><svg class="size-[30px]" viewBox="0 0 30 30"><path d="M22.500 0v8.500L4.300 22.200q-1 .8-2 0L.6 20.700q-.9-1 0-1.900z" fill="#0a70b5"/><path d="M22.500 30v-8.500L4.300 7.800q-1-.8-2 0L.6 9.300q-.9 1 0 1.900z" fill="#1687cd"/><path d="M22 0l7 3.200q1 .5 1 1.600v20.400q0 1.100-1 1.600L22 30q.5-.5.5-1.500v-27Q22.500.5 22 0z" fill="#2ba6ee"/></svg><div class="absolute bottom-[6px] w-2 h-1 rounded-full bg-[#7f807c]"></div></div>
    <div class="w-[55px] flex justify-center"><svg class="size-[29px]" viewBox="0 0 29 29"><circle cx="14.500" cy="14.500" r="14.500" fill="#1ed760"/><path d="M5 10.300Q15 7 24.500 12M6 15.200q9-2.500 16.500 2M7 19.500q7-2 13.500 2" fill="none" stroke="#111" stroke-width="2.600" stroke-linecap="round"/></svg></div>
    <div class="w-[55px] flex justify-center"><svg class="size-[30px]" viewBox="0 0 30 30"><defs><linearGradient id="fb" x1="0" y1="0" x2="0" y2="1"><stop offset="0" stop-color="#19aaff"/><stop offset="1" stop-color="#0763e0"/></linearGradient></defs><circle cx="15" cy="15" r="15" fill="url(#fb)"/><path d="M20.800 19.300l.7-4.300h-4.100v-2.800c0-1.200.6-2.300 2.400-2.300h1.900V6.200s-1.700-.3-3.300-.3c-3.400 0-5.600 2.100-5.600 5.800V15H9v4.300h3.800v10.500q2.300.4 4.600 0V19.300z" fill="#fff"/></svg></div>
    <div class="w-[55px] flex justify-center"><svg class="size-[30px]" viewBox="0 0 30 30"><defs><linearGradient id="mu" x1="0" y1="0" x2="0" y2="1"><stop offset="0" stop-color="#fb5c74"/><stop offset="1" stop-color="#fa233b"/></linearGradient></defs><rect width="30" height="30" rx="6.500" fill="url(#mu)"/><path d="M12 20.500V8.800L22 6.700v11.500" fill="none" stroke="#fff" stroke-width="1.800"/><path d="M11.200 7.500L23 5v4.500L11.200 12z" fill="#fff"/><ellipse cx="9.700" cy="21.500" rx="3.200" ry="2.600" fill="#fff"/><ellipse cx="19.800" cy="19.300" rx="3.200" ry="2.600" fill="#fff"/></svg></div>
    <div class="w-[55px] flex justify-center"><svg class="size-[30px]" viewBox="0 0 30 30" font-family="Open Sans, sans-serif" font-weight="700" font-size="8.500" fill="#08233c"><rect width="30" height="30" fill="#1b9bff"/><text x="3.800" y="10" textLength="22.500">prime</text><text x="3.800" y="18.500" textLength="22.500">video</text><path d="M5 21.500q9 6.500 19 1M21 21.500l4-.3-1 3.600" fill="none" stroke="#08233c" stroke-width="1.500"/></svg></div>
    <div class="w-[55px] flex justify-center"><svg class="w-[13px] h-[22px]" viewBox="0 0 13 22"><path d="M0 0h4.300v21.500L0 22zM8.700 0H13v22l-4.300-.5z" fill="#b1060f"/><path d="M0 0h4.300L13 22l-4.300-.5z" fill="#e50914"/></svg></div>
    <div class="w-[55px] flex justify-center"><svg class="w-[28px] h-[24px]" viewBox="0 0 28 24"><rect width="28" height="24" rx="1.500" fill="#f6bb18"/><rect x="2.500" y="2.500" width="23" height="19" fill="#1c9f5b"/><circle cx="14" cy="9.300" r="2" fill="#fff"/><path d="M9 15.500q0-3 5-3t5 3z" fill="#fff"/><circle cx="9.200" cy="11" r="1.100" fill="#7fd0a3"/><circle cx="18.800" cy="11" r="1.100" fill="#7fd0a3"/><path d="M6 15.500q0-2.500 3-2.500M22 15.500q0-2.500-3-2.500" stroke="#7fd0a3" stroke-width="1.300" fill="none"/><path d="M16 20.200h5.500v1.500H16z" fill="#fff"/></svg></div>
    <div class="w-[55px] h-full relative flex justify-center items-center"><svg class="size-[30px]" viewBox="0 0 30 30"><circle cx="15" cy="15" r="15" fill="#5865f2"/><path transform="translate(5.200 5.200) scale(.82)" d="M20.317 4.370a19.790 19.790 0 0 0-4.885-1.515c-.21.375-.445.865-.608 1.250a18.270 18.270 0 0 0-5.487 0 12.640 12.640 0 0 0-.617-1.250A19.740 19.740 0 0 0 3.677 4.370C.533 9.046-.32 13.580.099 18.057a19.900 19.900 0 0 0 5.993 3.030c.462-.63.874-1.295 1.226-1.994a13.100 13.100 0 0 1-1.872-.892l.372-.292c3.928 1.793 8.180 1.793 12.062 0l.373.292a12.300 12.300 0 0 1-1.873.892c.36.698.772 1.362 1.225 1.993a19.840 19.840 0 0 0 6.002-3.030c.5-5.177-.838-9.674-3.290-13.686zM8.020 15.330c-1.183 0-2.157-1.085-2.157-2.419 0-1.333.956-2.419 2.157-2.419 1.210 0 2.176 1.096 2.157 2.420 0 1.333-.956 2.418-2.157 2.418zm7.975 0c-1.183 0-2.157-1.085-2.157-2.419 0-1.333.955-2.419 2.157-2.419 1.210 0 2.176 1.096 2.157 2.420 0 1.333-.946 2.418-2.157 2.418z" fill="#fff"/></svg>
      <div class="absolute left-[30px] top-[9px] size-[18px] rounded-full bg-[#e05b5b] text-white text-[13.500px] leading-[18px] text-center tracking-tight">9+</div>
      <div class="absolute bottom-[6px] w-2 h-1 rounded-full bg-[#7f807c]"></div></div>
    <div class="w-[55px] h-full relative flex justify-center items-center"><svg class="size-[30px]" viewBox="0 0 30 30"><rect width="30" height="30" fill="#d64027"/><circle cx="15" cy="15" r="8.600" fill="none" stroke="#fff" stroke-width="3.400" stroke-dasharray="4.750 2" stroke-dashoffset="2.400"/><circle cx="15" cy="15" r="5" fill="none" stroke="#fff" stroke-width="1.300" stroke-dasharray="1.300 2.630" stroke-dashoffset=".6"/></svg><div class="absolute bottom-[6px] w-2 h-1 rounded-full bg-[#7f807c]"></div></div>
  </div>
  <div class="ml-auto mr-[24px] flex items-center text-[14.500px] leading-5 text-[#161616] shrink-0 -mt-px">
    <svg class="w-[14px] h-[8px]" viewBox="0 0 14 8"><path d="M1 7.200l6-6 6 6" fill="none" stroke="#111" stroke-width="1.500"/></svg>
    <svg class="ml-[26px] w-[14px] h-[20px]" viewBox="0 0 14 20" fill="none" stroke="#8c4547" stroke-width="1.300" stroke-linecap="round"><rect x="3.800" y=".8" width="6.400" height="12.200" rx="3.200"/><path d="M.7 9.500q0 6.500 6.300 6.500t6.300-6.500M7 16v3.500"/></svg>
    <div class="ml-[22px] w-[38px] text-center text-[15px] tracking-[-0.300px]"><div>ENG</div><div>US</div></div>
    <svg class="ml-[18px] w-5 h-[16px]" viewBox="0 0 20 16" fill="none" stroke="#161616" stroke-width="1.300" stroke-linecap="round"><path d="M.8 6Q10-3.500 19.200 6M3.600 8.800q6.400-6.500 12.800 0M6.300 11.400q3.700-3.700 7.400 0"/><circle cx="10" cy="13.800" r="1.300" fill="#161616" stroke-width=".8"/></svg>
    <svg class="ml-[10px] w-5 h-[17px]" viewBox="0 0 20 17" fill="none" stroke="#161616" stroke-width="1.200" stroke-linejoin="round" stroke-linecap="round"><path d="M.8 5.500h3L8 1.800v13.400L3.800 11.500h-3zM11 6q1.700 2.500 0 5M13.500 3.800q3.400 4.700 0 9.400M16.200 1.300q5.400 7.200 0 14.400"/></svg>
    <svg class="ml-[10px] w-5 h-[14px]" viewBox="0 0 20 14"><rect x=".7" y="1.200" width="16.200" height="11.600" rx="2.600" fill="none" stroke="#161616" stroke-width="1.300"/><rect x="3" y="3.500" width="9.500" height="7" rx=".8" fill="#161616"/><path d="M17.500 4.500l2.500 1v3l-2.500 1z" fill="#161616"/></svg>
    <div class="ml-[20px] w-[78px] text-right text-[15px] tracking-[-0.350px] whitespace-nowrap"><div>9:38 pm</div><div>19/01/2025</div></div>
  </div>
</footer>
</body>
</html>
